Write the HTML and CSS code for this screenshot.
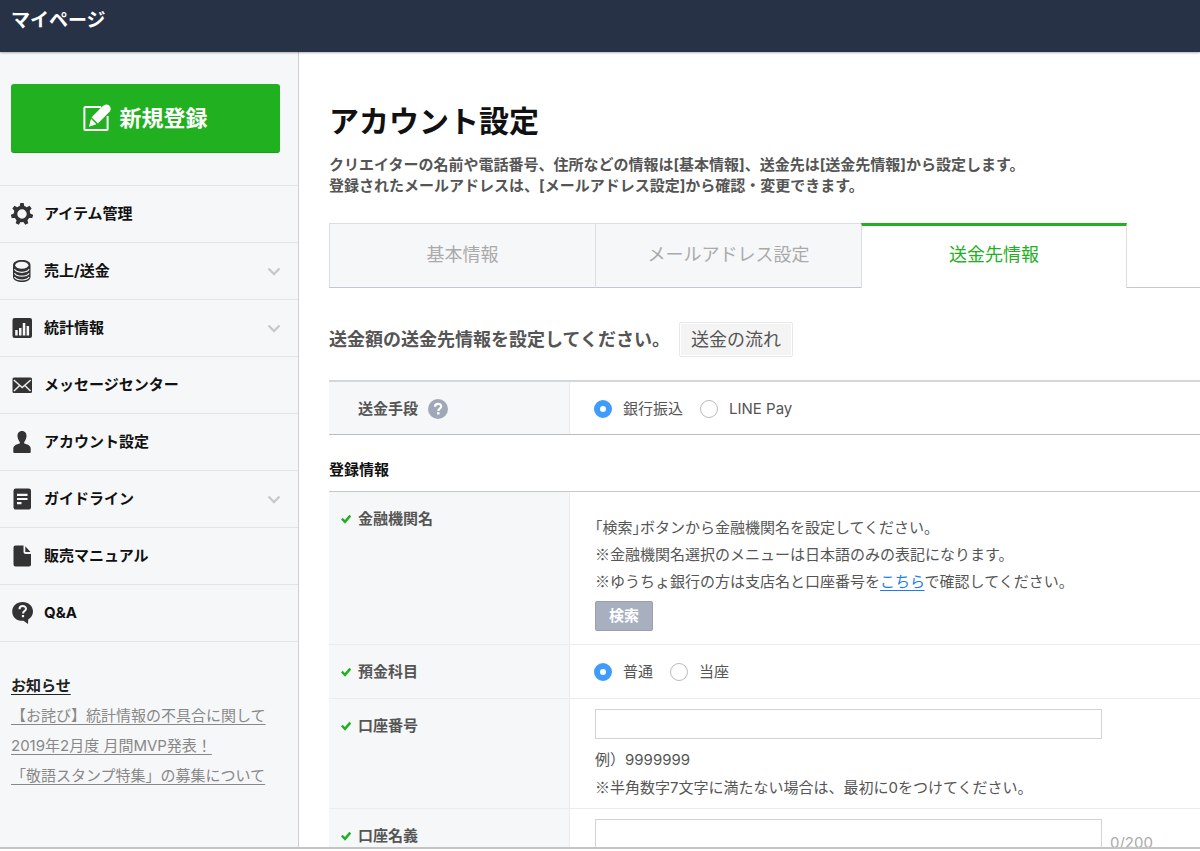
FILE: index.html
```html
<!DOCTYPE html>
<html lang="ja">
<head>
<meta charset="utf-8">
<title>マイページ</title>
<link rel="stylesheet" href="styles.css">
</head>
<body>
<header class="topbar"><span class="topbar-title">マイページ</span></header>
<div class="shell">
  <aside class="sidebar">
    <div class="create">
      <button class="create-button" type="button">
        <svg class="create-icon" viewBox="0 0 28 28" width="28" height="28" aria-hidden="true">
          <path d="M18 3H2.200Q1.400 3 1.400 3.800V25.200Q1.400 26 2.200 26H23.800Q24.600 26 24.600 25.200V12" fill="none" stroke="#fff" stroke-width="2"/>
          <path d="M19.500 2.200Q23-.8 26.200 1.500Q29 4.600 26.800 7.600L14.900 19.600L8.600 13.200Z" fill="#fff"/>
          <path d="M8 14.800L13.400 20.200L6 22.800Z" fill="#fff"/>
        </svg>
        <span>新規登録</span>
      </button>
    </div>
    <nav>
      <ul class="menu">
        <li><a class="menu-link" href="#">
          <svg class="menu-icon" viewBox="0 0 22 22" aria-hidden="true"><g fill="#333"><path d="M9.300 0h3.400l.7 4H8.600z"/><path d="M9.300 0h3.400l.7 4H8.600z" transform="rotate(51.430 11 11)"/><path d="M9.300 0h3.400l.7 4H8.600z" transform="rotate(102.860 11 11)"/><path d="M9.300 0h3.400l.7 4H8.600z" transform="rotate(154.290 11 11)"/><path d="M9.300 0h3.400l.7 4H8.600z" transform="rotate(205.710 11 11)"/><path d="M9.300 0h3.400l.7 4H8.600z" transform="rotate(257.140 11 11)"/><path d="M9.300 0h3.400l.7 4H8.600z" transform="rotate(308.570 11 11)"/></g><circle cx="11" cy="11" r="6.500" fill="none" stroke="#333" stroke-width="3.600"/></svg>
          <span>アイテム管理</span></a></li>
        <li><a class="menu-link" href="#">
          <svg class="menu-icon" viewBox="0 0 22 22" aria-hidden="true"><path d="M2 5C2 2 6 0 11 0s8.500 2 8.500 5v12c0 3-4 5-8.500 5S2 20 2 17z" fill="#333"/><ellipse cx="10.800" cy="5.300" rx="6.600" ry="3.500" fill="#f6f7f9"/><path d="M3.500 9.300c1.600 2.500 4.500 3 7.300 3s5.700-.5 7.300-3M3.500 13.200c1.600 2.500 4.500 3 7.300 3s5.700-.5 7.300-3M3.500 17c1.600 2.500 4.500 3 7.300 3s5.700-.5 7.300-3" fill="none" stroke="#f6f7f9" stroke-width="1.200"/></svg>
          <span>売上/送金</span>
          <svg class="chevron" viewBox="0 0 14 9" aria-hidden="true"><path d="M1.500 1.500L7 7l5.500-5.500" fill="none" stroke="#c8c9cb" stroke-width="2.400"/></svg></a></li>
        <li><a class="menu-link" href="#">
          <svg class="menu-icon" viewBox="0 0 22 22" aria-hidden="true"><rect x="1.500" y="1" width="19.500" height="20" rx="2" fill="#333"/><path d="M4.200 13h2.500v5.500H4.200zM8 11h2.500v7.500H8zM11.800 6h2.500v12.500h-2.500zM15.600 9h2.500v9.500h-2.500z" fill="#f6f7f9"/></svg>
          <span>統計情報</span>
          <svg class="chevron" viewBox="0 0 14 9" aria-hidden="true"><path d="M1.500 1.500L7 7l5.500-5.500" fill="none" stroke="#c8c9cb" stroke-width="2.400"/></svg></a></li>
        <li><a class="menu-link" href="#">
          <svg class="menu-icon" viewBox="0 0 22 22" aria-hidden="true"><rect x="1.500" y="3.500" width="19.500" height="15.500" rx="1.500" fill="#333"/><path d="M2.800 6L11.200 13.500L19.700 6M3 17l5.400-5.300M19.500 17l-5.400-5.300" fill="none" stroke="#e8e9eb" stroke-width="1.500"/></svg>
          <span>メッセージセンター</span></a></li>
        <li><a class="menu-link" href="#">
          <svg class="menu-icon" viewBox="0 0 22 22" aria-hidden="true"><path d="M11 0c3.100 0 4.700 2.300 4.500 5.300-.1 2.300-1.300 4.500-2.300 5.700v1.500c3 1 6.300 1.500 6.500 5V21q0 1-1 1H3.300q-1 0-1-1v-3.500c.2-3.500 3.500-4 6.500-5V11c-1-1.200-2.200-3.400-2.300-5.700C6.300 2.300 7.900 0 11 0z" fill="#333"/></svg>
          <span>アカウント設定</span></a></li>
        <li><a class="menu-link" href="#">
          <svg class="menu-icon" viewBox="0 0 22 22" aria-hidden="true"><rect x="2.500" y=".5" width="17.500" height="21" rx="2.200" fill="#333"/><path d="M6 6.800h10.500M6 11h10.500M6 15.200h4.500" stroke="#f6f7f9" stroke-width="2.200"/></svg>
          <span>ガイドライン</span>
          <svg class="chevron" viewBox="0 0 14 9" aria-hidden="true"><path d="M1.500 1.500L7 7l5.500-5.500" fill="none" stroke="#c8c9cb" stroke-width="2.400"/></svg></a></li>
        <li><a class="menu-link" href="#">
          <svg class="menu-icon" viewBox="0 0 22 22" aria-hidden="true"><path d="M4.500.5H12.500V7q0 2 2 2H20v10.500q0 2-2 2H4.500q-2 0-2-2v-17q0-2 2-2zM14.300 1.200L19.500 7h-5.200z" fill="#333"/></svg>
          <span>販売マニュアル</span></a></li>
        <li><a class="menu-link" href="#">
          <svg class="menu-icon" viewBox="0 0 22 22" aria-hidden="true"><path d="M11.500 0C17.500 0 22 4 22 9.500c0 3.500-2 6.300-4.800 8L17 22l-4.500-3.200C6 19.300 1.200 15.500 1.200 9.500 1.200 4 5.700 0 11.500 0z" fill="#333"/><path d="M8.500 7.200c0-4.200 6.500-4 6.500-.4 0 2.200-3 2.400-3 4.700" fill="none" stroke="#f6f7f9" stroke-width="2"/><rect x="10.900" y="13" width="2.200" height="2.200" fill="#f6f7f9"/></svg>
          <span>Q&amp;A</span></a></li>
      </ul>
    </nav>
    <section class="news">
      <h2 class="news-title"><a href="#">お知らせ</a></h2>
      <ul class="news-list">
        <li><a href="#">【お詫び】統計情報の不具合に関して</a></li>
        <li><a href="#">2019年2月度 月間MVP発表！</a></li>
        <li><a href="#">「敬語スタンプ特集」の募集について</a></li>
      </ul>
    </section>
  </aside>
  <main class="content">
    <h1 class="page-title">アカウント設定</h1>
    <p class="lead">クリエイターの名前や電話番号、住所などの情報は[基本情報]、送金先は[送金先情報]から設定します。<br>登録されたメールアドレスは、[メールアドレス設定]から確認・変更できます。</p>
    <nav class="tabs">
      <a class="tab" href="#">基本情報</a>
      <a class="tab" href="#">メールアドレス設定</a>
      <a class="tab tab-active" href="#" aria-current="page">送金先情報</a>
      <span class="tabs-rest"></span>
    </nav>
    <div class="intro">
      <h2 class="intro-title">送金額の送金先情報を設定してください。</h2>
      <button class="flow-button" type="button">送金の流れ</button>
    </div>
    <form>
      <table class="form-table method">
        <tbody><tr>
          <th scope="row"><div class="row-label">送金手段
            <svg class="help" viewBox="0 0 20 20" width="20" height="20" role="img" aria-label="ヘルプ"><circle cx="10" cy="10" r="10" fill="#a0a8b8"/><path d="M7 7.800c0-4 6.200-3.800 6.200-.4 0 2.200-2.900 2.200-2.900 4.600" fill="none" stroke="#fff" stroke-width="2.200"/><rect x="9.100" y="13.200" width="2.400" height="2.300" fill="#fff"/></svg></div></th>
          <td class="options"><div class="choices">
            <label class="choice"><input type="radio" name="method" checked>銀行振込</label>
            <label class="choice"><input type="radio" name="method">LINE Pay</label>
          </div></td>
        </tr></tbody>
      </table>
      <h3 class="section-title">登録情報</h3>
      <table class="form-table">
        <tbody>
        <tr>
          <th scope="row"><div class="row-label required"><svg class="check" viewBox="0 0 10 10" aria-hidden="true"><path d="M.8 4.600L4 7.800L9.300 1.600" fill="none" stroke="#20b020" stroke-width="2.500"/></svg>金融機関名</div></th>
          <td class="bank">
            <p class="note">｢検索｣ボタンから金融機関名を設定してください。<br><span class="mark">※</span>金融機関名選択のメニューは日本語のみの表記になります。<br><span class="mark">※</span>ゆうちょ銀行の方は支店名と口座番号を<a class="here" href="#">こちら</a>で確認してください。</p>
            <button class="search-button" type="button">検索</button>
          </td>
        </tr>
        <tr>
          <th scope="row"><div class="row-label required"><svg class="check" viewBox="0 0 10 10" aria-hidden="true"><path d="M.8 4.600L4 7.800L9.300 1.600" fill="none" stroke="#20b020" stroke-width="2.500"/></svg>預金科目</div></th>
          <td class="options"><div class="choices">
            <label class="choice"><input type="radio" name="type" checked>普通</label>
            <label class="choice"><input type="radio" name="type">当座</label>
          </div></td>
        </tr>
        <tr>
          <th scope="row"><div class="row-label required"><svg class="check" viewBox="0 0 10 10" aria-hidden="true"><path d="M.8 4.600L4 7.800L9.300 1.600" fill="none" stroke="#20b020" stroke-width="2.500"/></svg><label for="number">口座番号</label></div></th>
          <td class="field">
            <input class="text-input" id="number" type="text">
            <p class="hint">例）9999999<br><span class="mark">※</span>半角数字7文字に満たない場合は、最初に0をつけてください。</p>
          </td>
        </tr>
        <tr>
          <th scope="row"><div class="row-label required"><svg class="check" viewBox="0 0 10 10" aria-hidden="true"><path d="M.8 4.600L4 7.800L9.300 1.600" fill="none" stroke="#20b020" stroke-width="2.500"/></svg><label for="holder">口座名義</label></div></th>
          <td class="field"><div class="counted">
            <input class="text-input" id="holder" type="text">
            <span class="counter">0/200</span>
          </div></td>
        </tr>
        </tbody>
      </table>
    </form>
  </main>
</div>
</body>
</html>
```

FILE: styles.css
```css
* { box-sizing: border-box; }

body {
  margin: 0;
  height: 100vh;
  padding-bottom: 2px;
  display: flex;
  flex-direction: column;
  overflow: hidden;
  background: #fff;
  color: #555;
  font-family: Inter, "Noto Sans CJK JP", sans-serif;
  font-size: 15px;
  line-height: 24px;
}

h1, h2, h3, p, ul { margin: 0; padding: 0; }
ul { list-style: none; }
button, input { font: inherit; }

.topbar {
  flex: none;
  height: 52px;
  padding: 9px 11px;
  background: #283246;
  color: #fff;
  font-size: 19px;
  font-weight: 700;
  box-shadow: 0 1px 2px rgba(0, 0, 0, .3);
  z-index: 1;
}

.shell {
  flex: 1;
  min-height: 0;
  display: flex;
  overflow: hidden;
  border-bottom: 2px solid #c4c4c4;
}

.sidebar {
  flex: none;
  width: 299px;
  background: #f6f7f9;
  border-right: 1px solid #cdcfd4;
}

.create { padding: 32px 18px 32px 11px; }

.create-button {
  width: 100%;
  height: 69px;
  display: flex;
  align-items: center;
  justify-content: center;
  gap: 8px;
  border: 0;
  border-bottom: 1px solid #1b9c1b;
  border-radius: 3px;
  background: #20b020;
  color: #fff;
  font-size: 22px;
  font-weight: 700;
}

.menu { border-top: 1px solid #e2e4e7; }
.menu li { border-bottom: 1px solid #e2e4e7; }

.menu-link {
  display: flex;
  align-items: center;
  gap: 11px;
  height: 56px;
  padding: 0 17px 0 11px;
  color: #111;
  font-weight: 700;
  text-decoration: none;
}

.menu-icon { width: 22px; height: 22px; }
.chevron { width: 14px; height: 9px; margin-left: auto; }

.news { padding: 29px 11px; line-height: 30px; }
.news-title { font-size: 15px; }
.news a { color: #888; text-underline-offset: 3px; text-decoration-thickness: 1px; }
.news .news-title a { color: #222; }

.content {
  flex: 1;
  min-width: 0;
  padding: 48px 0 0 30px;
}

.page-title {
  color: #111;
  font-size: 30px;
  line-height: 42px;
}

.lead {
  padding: 12px 0 27px;
  line-height: 21px;
  font-weight: 700;
}

.tabs { display: flex; }

.tab {
  flex: none;
  width: 266px;
  height: 65px;
  border: solid #dcdee2;
  border-width: 1px 0 1px 1px;
  border-bottom-color: #c4c7d2;
  background: #f6f7f9;
  color: #aaa;
  font-size: 18px;
  line-height: 62px;
  text-align: center;
  text-decoration: none;
}

.tab-active {
  border-top: 3px solid #20b020;
  border-right: 1px solid #dcdee2;
  border-bottom: 0;
  background: #fff;
  color: #20b020;
  line-height: 58px;
}

.tabs-rest { flex: 1; border-bottom: 1px solid #c4c7d2; }

.intro {
  display: flex;
  align-items: center;
  gap: 9px;
  padding: 34px 0 23px;
}

.intro-title { font-size: 18px; }

.flow-button {
  height: 35px;
  padding: 0 11px;
  border: 1px solid #e6e8ea;
  border-radius: 2px;
  background: #f4f4f4;
  box-shadow: inset 0 0 0 1px #fff;
  color: #555;
  font-size: 18px;
  line-height: 24px;
}

.form-table {
  width: 100%;
  table-layout: fixed;
  border-collapse: separate;
  border-spacing: 0;
  border-top: 1px solid #c4c7cf;
}

.method { border-top: 2px solid #d3d6da; border-bottom: 1px solid #b9bbc7; }

.form-table th {
  width: 241px;
  padding: 15px 12px;
  background: #f6f7f9;
  border-right: 1px solid #e9ebee;
  border-bottom: 1px solid #ebecee;
  text-align: left;
  vertical-align: top;
}

.form-table td {
  padding: 15px 25px 14px;
  border-bottom: 1px solid #ebecee;
  vertical-align: top;
}

.form-table th { padding-bottom: 14px; }
.form-table .options { padding-left: 24px; }
.form-table.method th, .form-table.method td { padding-bottom: 13px; border-bottom: 0; }

.row-label {
  display: flex;
  align-items: center;
  gap: 10px;
  padding-left: 17px;
}

.required { padding-left: 0; gap: 7px; }
.check { width: 10px; height: 10px; }

.choices { display: flex; gap: 17px; }
.choice { display: flex; align-items: center; gap: 11px; }

.choice input {
  appearance: none;
  width: 18px;
  height: 18px;
  margin: 0;
  border: 1px solid #bbb;
  border-radius: 50%;
  background: #fff;
}

.choice input:checked { border: 6px solid #3f9bfc; }

.form-table .bank { padding: 22px 25px 13px; }
.note { line-height: 27px; }
.mark { font-family: "Noto Sans CJK JP", sans-serif; line-height: 1; }
.here { color: #1a7cf0; text-underline-offset: 3px; }

.search-button {
  display: block;
  height: 30px;
  margin-top: 6px;
  padding: 0 13px;
  border: 1px solid #99a1b0;
  border-radius: 2px;
  background: #a8b0bf;
  color: #fff;
  font-weight: 700;
  line-height: 24px;
}

.section-title {
  padding: 23px 0 9px;
  color: #111;
  font-size: 15px;
}

.form-table .field { padding: 10px 25px 6px; }

.text-input {
  display: block;
  width: 507px;
  height: 30px;
  padding: 0 8px;
  border: 1px solid #d0d4d8;
  background: #fff;
}

.hint { padding-top: 7px; line-height: 28px; }
.counted { display: flex; gap: 8px; }
.counter { padding-top: 12px; color: #aaa; }
```
